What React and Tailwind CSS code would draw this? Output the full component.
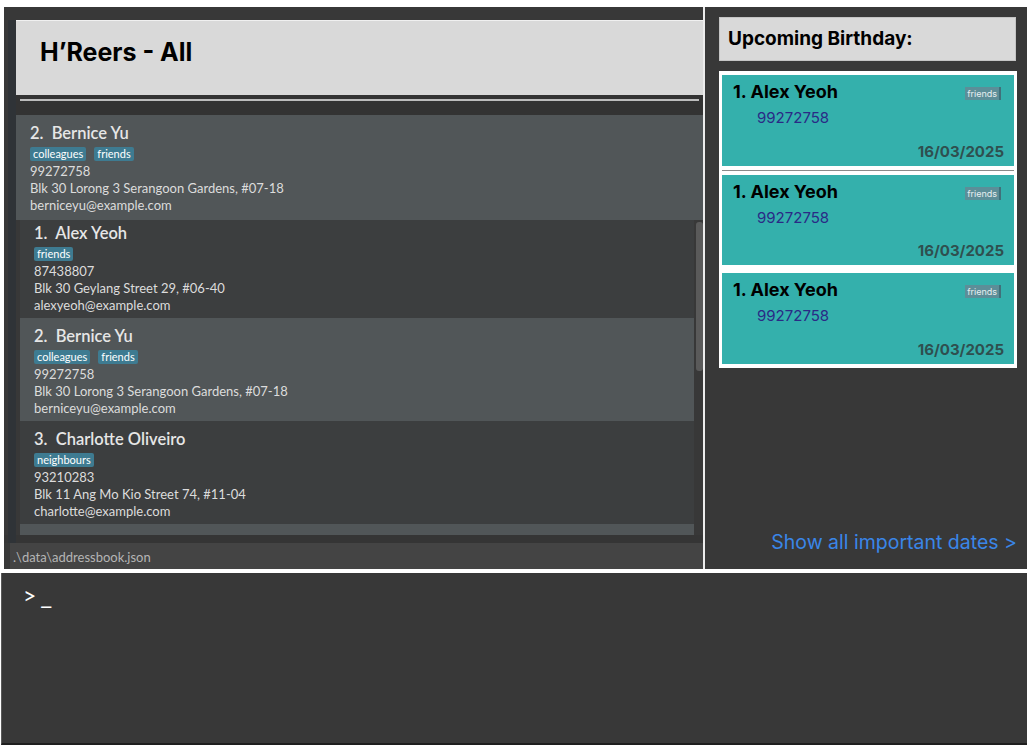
import React from "react";

const people = [
  {
    idx: 1,
    name: "Alex Yeoh",
    tags: ["friends"],
    phone: "87438807",
    address: "Blk 30 Geylang Street 29, #06-40",
    email: "alexyeoh@example.com",
  },
  {
    idx: 2,
    name: "Bernice Yu",
    tags: ["colleagues", "friends"],
    phone: "99272758",
    address: "Blk 30 Lorong 3 Serangoon Gardens, #07-18",
    email: "berniceyu@example.com",
  },
  {
    idx: 3,
    name: "Charlotte Oliveiro",
    tags: ["neighbours"],
    phone: "93210283",
    address: "Blk 11 Ang Mo Kio Street 74, #11-04",
    email: "charlotte@example.com",
  },
];

function PersonCard({ person, light, className = "" }) {
  return (
    <div
      className={`h-[103px] shrink-0 pl-[14px] pt-[8px] ${light ? "bg-[#515658]" : "bg-[#3c3e3f]"} ${className}`}
    >
      <div className="h-[20px] text-[16.5px] leading-[20px] font-semibold text-[#e6e6e6]">
        {person.idx}.&nbsp;&nbsp;{person.name}
      </div>
      <div className="mt-[4px] flex gap-[8px] h-[14px]">
        {person.tags.map((t) => (
          <span
            key={t}
            className="h-[14px] px-[3px] bg-[#3e7b91] text-[11px] leading-[14px] text-white rounded-[2px]"
          >
            {t}
          </span>
        ))}
      </div>
      <div className="mt-[2px] text-[13px] leading-[17px] text-[#dcdcdc]">
        <div>{person.phone}</div>
        <div>{person.address}</div>
        <div>{person.email}</div>
      </div>
    </div>
  );
}

function BirthdayCard({ className = "" }) {
  return (
    <div className={`bg-[#34b0ac] h-[91px] pl-[11px] pr-[10px] pt-[7px] flex flex-col ${className}`}>
      <div className="flex items-start justify-between">
        <span className="text-[18px] leading-[20px] font-bold text-black">1. Alex Yeoh</span>
        <span className="mt-[5px] mr-[3px] h-[13px] px-[2px] bg-[#5c8e98] border-r-2 border-[#41707a] text-[9px] leading-[13px] text-[#e8eef0]">
          friends
        </span>
      </div>
      <div className="pl-[24px] mt-[7px] text-[15px] leading-[18px] text-[#2a2a86]">99272758</div>
      <div className="mt-auto mb-[5px] text-right text-[15px] leading-[18px] font-bold text-[#2f4f4f]">
        16/03/2025
      </div>
    </div>
  );
}

export default function App() {
  return (
    <div
      className="w-[1031px] h-[751px] bg-white overflow-hidden"
      style={{ fontFamily: "Lato, 'Open Sans', sans-serif" }}
    >
      {/* main window */}
      <div className="ml-[4px] mt-[7px] w-[1023px] h-[562px] bg-[#383838] flex">
        {/* left pane */}
        <div className="w-[699px] flex flex-col pt-[13px] relative">
          <div className="absolute left-[4px] top-[13px] bottom-[26px] w-[8px] bg-[#2f3337]" />
          {/* header */}
          <div
            className="ml-[12px] h-[75px] bg-[#d9d9d9] border-t border-[#f0f0f0] pt-[16px] pl-[24px]"
            style={{ fontFamily: "Inter, sans-serif" }}
          >
            <span className="text-[25px] leading-[30px] font-bold text-black">H’Reers - All</span>
          </div>
          <div className="ml-[12px] h-[20px] bg-[#333333] pt-[4px]">
            <div className="mx-[4px] h-[2px] bg-[#bdbdbd]" />
          </div>

          {/* selected person */}
          <PersonCard person={people[1]} light className="ml-[12px] !h-[105px]" />

          {/* list */}
          <div className="ml-[16px] h-[315px] flex overflow-hidden bg-[#383838]">
            <div className="w-[674px] flex flex-col overflow-hidden">
              <PersonCard person={people[0]} className="-mt-[5px]" />
              <PersonCard person={people[1]} light />
              <PersonCard person={people[2]} />
              <div className="h-[103px] shrink-0 bg-[#515658]" />
            </div>
            <div className="ml-[2px] w-[7px] pt-[2px]">
              <div className="h-[149px] bg-[#5a5a5a] rounded-[3px]" />
            </div>
          </div>

          <div className="h-[8px] bg-[#353535]" />
          {/* status bar */}
          <div className="ml-[6px] h-[26px] bg-[#444444] flex items-center pl-[3px] pt-[4px] text-[13px] text-[#b5b5b5]">
            .\data\addressbook.json
          </div>
        </div>

        <div className="w-[2px] bg-[#ececec]" />

        {/* right pane */}
        <div className="flex-1 flex flex-col" style={{ fontFamily: "Inter, sans-serif" }}>
          <div className="ml-[14px] mt-[10px] w-[297px] h-[44px] bg-[#d9d9d9] border border-[#c4c4c4] flex items-center pl-[8px]">
            <span className="text-[19px] font-bold text-black">Upcoming Birthday:</span>
          </div>
          <div className="ml-[14px] mt-[10px] w-[298px] bg-white p-[3px] pt-[4px] pb-[4px] flex flex-col">
            <BirthdayCard />
            <div className="h-[9px] flex items-center">
              <div className="w-full h-px bg-[#8a8a8a]" />
            </div>
            <BirthdayCard className="!h-[90px]" />
            <div className="h-[8px]" />
            <BirthdayCard />
          </div>
          <div className="mt-auto mb-[12px] pr-[10px] text-right text-[19.5px] text-[#3a86e8]">
            Show all important dates &gt;
          </div>
        </div>
      </div>

      {/* command box */}
      <div className="mt-[4px] ml-[1px] w-[1026px] h-[172px] bg-[#383838] border-l border-[#5a5a5a] border-b-2 border-b-[#1e1e1e] pl-[21px] pt-[6px] text-white">
        <div className="flex items-end gap-[4px]">
          <span className="text-[23px] leading-[28px]">&gt;</span>
          <span className="text-[26px] leading-[30px]">_</span>
        </div>
      </div>
    </div>
  );
}
